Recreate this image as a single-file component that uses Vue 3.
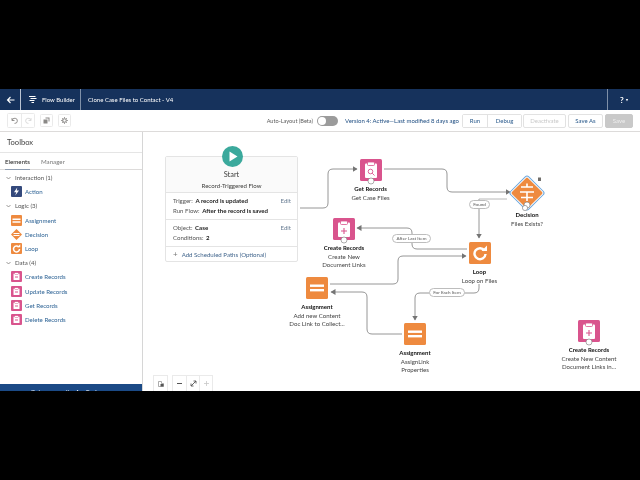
<template>
  <div class="screen">
    <div class="app">
      <header class="topbar">
        <button class="back">
          <svg width="9" height="8" viewBox="0 0 9 8"><path d="M8.5 4H1.5M4.5 1 1.5 4l3 3" fill="none" stroke="#fff" stroke-width="1.1" /></svg>
        </button>
        <div class="brand">
          <svg width="9" height="9" viewBox="0 0 9 9"><path d="M1 1.5h6.5M2.5 3.5h6M1.5 5.500h5M3.5 7.5h2.5" fill="none" stroke="#fff" stroke-width="1" /></svg>
          <span>Flow Builder</span>
        </div>
        <div class="flow-title">Clone Case Files to Contact - V4</div>
        <div class="help">? <span class="caret">▾</span></div>
      </header>

      <div class="toolbar">
        <div class="tool-group">
          <button class="tool"><svg width="7" height="7" viewBox="0 0 7 7"><path d="M1 1v2.5h2.5M1.2 3.4A2.6 2.6 0 1 1 3.5 6.4" fill="none" stroke="#8a8886" stroke-width="0.9" /></svg></button>
          <button class="tool"><svg width="7" height="7" viewBox="0 0 7 7"><path d="M6 1v2.5H3.5M5.8 3.4A2.6 2.6 0 1 0 3.5 6.4" fill="none" stroke="#d8d8d8" stroke-width="0.9" /></svg></button>
        </div>
        <button class="tool solo"><svg width="7" height="7" viewBox="0 0 7 7"><path d="M2.5 0.5h4v4h-1v-3h-3z M0.5 2.5h4v4h-4z" fill="#8a8886" /></svg></button>
        <button class="tool solo"><svg width="7" height="7" viewBox="0 0 7 7"><circle cx="3.5" cy="3.5" r="1.8" fill="none" stroke="#8a8886" stroke-width="1.1" /><path d="M3.5 0v1.2M3.5 5.8V7M0 3.5h1.2M5.8 3.5H7M1 1l.9.9M5.1 5.1l.9.9M6 1l-.9.9M1.9 5.1 1 6" stroke="#8a8886" stroke-width="0.8" /></svg></button>

        <div class="tool-right">
          <span class="auto-label">Auto-Layout (Beta)</span>
          <span class="toggle"><i></i></span>
          <span class="version">Version 4: Active—Last modified 8 days ago</span>
          <div class="btn-group">
            <button class="btn run">Run</button>
            <button class="btn debug">Debug</button>
          </div>
          <button class="btn deactivate">Deactivate</button>
          <button class="btn save-as">Save As</button>
          <button class="btn save">Save</button>
        </div>
      </div>

      <div class="body">
        <aside class="toolbox">
          <div class="toolbox-head">Toolbox</div>
          <div class="tabs">
            <span class="tab active">Elements</span>
            <span class="tab">Manager</span>
          </div>
          <div class="palette">
            <template v-for="section in palette" :key="section.name">
              <div class="section-row">
                <svg width="5" height="4" viewBox="0 0 5 4"><path d="M.5 1 2.5 3 4.5 1" fill="none" stroke="#706e6b" stroke-width="0.7" /></svg>
                {{ section.name }}
              </div>
              <div v-for="item in section.items" :key="item.name" class="item-row">
                <svg width="11" height="11" viewBox="0 0 22 22">
                  <template v-if="item.type === 'action'">
                    <rect width="22" height="22" rx="2" fill="#34497c" />
                    <path d="M12.5 3 6 12.5h4.5L8.5 19l7.5-10h-4.5z" fill="#fff" />
                  </template>
                  <template v-else-if="item.type === 'assign'">
                    <rect width="22" height="22" rx="2" fill="#ee8a3f" />
                    <rect x="3" y="7" width="16" height="3" fill="#fff" />
                    <rect x="3" y="12.5" width="16" height="3" fill="#fff" />
                  </template>
                  <template v-else-if="item.type === 'decision'">
                    <path d="M11 0 22 11 11 22 0 11z" fill="#ee8a3f" />
                    <rect x="5" y="8" width="12" height="2" fill="#fff" />
                    <rect x="5" y="12" width="12" height="2" fill="#fff" />
                  </template>
                  <template v-else-if="item.type === 'loop'">
                    <rect width="22" height="22" rx="2" fill="#ee8a3f" />
                    <path d="M15.5 8A6 6 0 1 0 17 12" fill="none" stroke="#fff" stroke-width="3" />
                    <path d="M12.5 8.5h6v-6z" fill="#fff" />
                  </template>
                  <template v-else>
                    <rect width="22" height="22" rx="2" fill="#d9548d" />
                    <rect x="5" y="5" width="12" height="13" rx="1" fill="#fff" />
                    <rect x="8" y="3.5" width="6" height="3.5" fill="#fff" stroke="#d9548d" />
                    <path d="M8 12h6" stroke="#d9548d" stroke-width="2" />
                  </template>
                </svg>
                <span>{{ item.name }}</span>
              </div>
            </template>
          </div>
          <div class="promo">Get more on the AppExchange</div>
        </aside>

        <main class="canvas">
          <svg class="wires" width="497" height="259" viewBox="143 132 497 259">
            <defs>
              <marker id="tip" markerWidth="6" markerHeight="6" refX="4.5" refY="3" orient="auto" markerUnits="userSpaceOnUse">
                <path d="M0 0 5 3 0 6z" fill="#747474" />
              </marker>
            </defs>
            <path v-for="d in wires" :key="d" :d="d" fill="none" stroke="#8a8a8a" stroke-width="0.9" marker-end="url(#tip)" />
            <path d="M479 199H507" fill="none" stroke="#b8b8b8" stroke-width="1" />
          </svg>

          <section class="start-card">
            <div class="play">
              <svg width="21" height="21" viewBox="0 0 21 21"><circle cx="10.5" cy="10.5" r="10.5" fill="#3ba99c" /><path d="M7.5 5.5 15.5 10.5 7.5 15.5z" fill="#fff" /></svg>
            </div>
            <div class="start-head">
              <div class="start-title">Start</div>
              <div class="start-sub">Record-Triggered Flow</div>
            </div>
            <div class="start-row">
              <div>
                <div class="kv"><span>Trigger:</span> <b>A record is updated</b></div>
                <div class="kv"><span>Run Flow:</span> <b>After the record is saved</b></div>
              </div>
              <a class="edit">Edit</a>
            </div>
            <div class="start-row">
              <div>
                <div class="kv"><span>Object:</span> <b>Case</b></div>
                <div class="kv"><span>Conditions:</span> <b>2</b></div>
              </div>
              <a class="edit">Edit</a>
            </div>
            <div class="start-add"><span class="plus">+</span> Add Scheduled Paths (Optional)</div>
          </section>

          <div v-for="node in nodes" :key="node.id" class="node" :style="nodeStyle(node)">
            <svg v-if="node.type === 'decision'" class="glyph glyph-decision" width="38" height="38" viewBox="0 0 38 38">
              <rect x="7" y="7" width="24" height="24" rx="2" transform="rotate(45 19 19)" fill="#ee8a3f" stroke="#fff" stroke-width="1.4" />
              <rect x="6.3" y="6.3" width="25.4" height="25.4" rx="2.5" transform="rotate(45 19 19)" fill="none" stroke="#6ba6dc" stroke-width="1" />
              <path d="M13 13h12M12 18h14M13 23.5h12M19 9.500v3.500M19 18v5M19 24v3" stroke="#fff" stroke-width="1.6" />
              <circle cx="19" cy="31" r="3" fill="#fff" stroke="#777" stroke-width="0.6" />
              <circle cx="17" cy="34" r="2.6" fill="#fff" stroke="#777" stroke-width="0.6" />
              <path d="M30 3.5h3v3.5h-3z" fill="#706e6b" />
            </svg>
            <svg v-else class="glyph" width="22" height="22" viewBox="0 0 22 22">
              <template v-if="node.type === 'assign'">
                <rect width="22" height="22" rx="1.5" fill="#ee8a3f" />
                <rect x="4" y="7.5" width="14" height="2.4" fill="#fff" />
                <rect x="4" y="12" width="14" height="2.4" fill="#fff" />
              </template>
              <template v-else-if="node.type === 'loop'">
                <rect width="22" height="22" rx="1.5" fill="#ee8a3f" />
                <path d="M15.5 8.5A5.5 5.5 0 1 0 16.5 12" fill="none" stroke="#fff" stroke-width="2.4" />
                <path d="M12.5 9h5.500V3.500z" fill="#fff" />
              </template>
              <template v-else>
                <rect width="22" height="22" rx="1.5" fill="#d9548d" />
                <rect x="5" y="4.5" width="12" height="14.5" rx="1" fill="#fff" />
                <rect x="7.5" y="3" width="7" height="3.5" rx="1" fill="#fff" stroke="#d9548d" stroke-width="0.8" />
                <path v-if="node.type === 'create'" d="M11 10v6M8 13h6" stroke="#d9548d" stroke-width="1.1" />
                <g v-else fill="none" stroke="#d9548d" stroke-width="0.9">
                  <circle cx="10.5" cy="12.5" r="2.3" />
                  <path d="M12.2 14.2 14.5 16.5" />
                </g>
                <circle cx="11" cy="22" r="3" fill="#fff" stroke="#777" stroke-width="0.6" />
              </template>
            </svg>
            <div class="node-title">{{ node.title }}</div>
            <div v-for="line in node.lines" :key="line" class="node-line">{{ line }}</div>
          </div>

          <span v-for="pill in pills" :key="pill.text" class="pill" :style="pillStyle(pill)">{{ pill.text }}</span>

          <div class="zoom-tools">
            <button class="zoom-btn lone"><svg width="6" height="6" viewBox="0 0 6 6"><path d="M.5.5h3v2h2v3h-5z" fill="none" stroke="#8a8a8a" stroke-width="0.7" /><rect x="2.5" y="3" width="3" height="2.5" fill="#555" /></svg></button>
            <div class="zoom-group">
              <button class="zoom-btn"><svg width="7" height="7" viewBox="0 0 7 7"><path d="M1 3.5h5" stroke="#555" stroke-width="1" /></svg></button>
              <button class="zoom-btn"><svg width="7" height="7" viewBox="0 0 7 7"><path d="M1 6 6 1M3.500 1H6v2.500M1 3.500V6h2.500" fill="none" stroke="#555" stroke-width="0.9" /></svg></button>
              <button class="zoom-btn"><svg width="7" height="7" viewBox="0 0 7 7"><path d="M1 3.5h5M3.5 1v5" stroke="#c8c8c8" stroke-width="0.8" /></svg></button>
            </div>
          </div>
        </main>
      </div>
    </div>
  </div>
</template>

<script setup>
const palette = [
  { name: 'Interaction (1)', items: [{ name: 'Action', type: 'action' }] },
  {
    name: 'Logic (3)',
    items: [
      { name: 'Assignment', type: 'assign' },
      { name: 'Decision', type: 'decision' },
      { name: 'Loop', type: 'loop' }
    ]
  },
  {
    name: 'Data (4)',
    items: [
      { name: 'Create Records', type: 'record' },
      { name: 'Update Records', type: 'record' },
      { name: 'Get Records', type: 'record' },
      { name: 'Delete Records', type: 'record' }
    ]
  }
]

// page coordinates: x is the centre of the icon, y its top edge
const nodes = [
  { id: 'get', x: 370.5, y: 159, type: 'get', title: 'Get Records', lines: ['Get Case Files'] },
  { id: 'decision', x: 527, y: 174, type: 'decision', title: 'Decision', lines: ['Files Exists?'] },
  { id: 'create1', x: 344, y: 218, type: 'create', title: 'Create Records', lines: ['Create New', 'Document Links'] },
  { id: 'loop', x: 479.5, y: 242, type: 'loop', title: 'Loop', lines: ['Loop on Files'] },
  { id: 'assign1', x: 317, y: 277, type: 'assign', title: 'Assignment', lines: ['Add new Content', 'Doc Link to Collect...'] },
  { id: 'assign2', x: 415, y: 323, type: 'assign', title: 'Assignment', lines: ['AssignLink', 'Properties'] },
  { id: 'create2', x: 589, y: 320, type: 'create', title: 'Create Records', lines: ['Create New Content', 'Document Links in...'] }
]

const wires = [
  'M300 208H323Q328 208 328 203V174Q328 169 333 169H357',
  'M384 169H442Q447 169 447 174V187Q447 192 452 192H510',
  'M479 199V238',
  'M467 249H417Q412 249 412 244V233Q412 228 407 228H357',
  'M330 284H393Q398 284 398 279V261Q398 256 403 256H466',
  'M479 284V288Q479 293 474 293H420Q415 293 415 298V320',
  'M402 334H372Q367 334 367 329V297Q367 292 362 292H331'
]

const pills = [
  { text: 'Found', x: 469, y: 200, w: 21 },
  { text: 'After Last Item', x: 392, y: 234, w: 39 },
  { text: 'For Each Item', x: 429, y: 288, w: 36 }
]

function nodeStyle(node) {
  return { left: node.x - 143 - 45 + 'px', top: node.y - 132 + 'px' }
}

function pillStyle(pill) {
  return { left: pill.x - 143 + 'px', top: pill.y - 132 + 'px', width: pill.w + 'px' }
}
</script>

<style>
html, body {
  margin: 0;
  background: #000;
}
</style>

<style scoped>
.screen {
  width: 640px;
  height: 480px;
  padding-top: 89px;
  box-sizing: border-box;
  background: #000;
  overflow: hidden;
  font-family: "Lato", "Liberation Sans", sans-serif;
  color: #3e3e3c;
}

.app {
  height: 302px;
  display: flex;
  flex-direction: column;
  background: #fff;
  overflow: hidden;
  filter: blur(0.3px);
}

button {
  font-family: inherit;
  padding: 0;
  margin: 0;
}

.topbar {
  height: 21px;
  flex: none;
  display: flex;
  align-items: stretch;
  background: #16325c;
  color: #fff;
  font-size: 6px;
}

.back {
  width: 21px;
  border: none;
  border-right: 1px solid #b9c3d2;
  background: none;
  display: flex;
  align-items: center;
  justify-content: center;
}

.brand {
  width: 60px;
  box-sizing: border-box;
  padding-left: 7px;
  display: flex;
  align-items: center;
  gap: 5px;
  border-right: 1px solid #7f90a8;
}

.flow-title {
  padding-left: 7px;
  display: flex;
  align-items: center;
  flex: 1;
}

.help {
  width: 33px;
  box-sizing: border-box;
  border-left: 1px solid #7f90a8;
  padding-left: 12px;
  display: flex;
  align-items: center;
  gap: 2px;
  font-size: 8px;
  font-weight: 700;
}

.caret {
  font-size: 4px;
}

.toolbar {
  height: 22px;
  flex: none;
  box-sizing: border-box;
  border-bottom: 1px solid #dddbda;
  display: flex;
  align-items: center;
  padding: 0 7px;
  gap: 5px;
}

.tool-group {
  display: flex;
  border: 1px solid #eaeaea;
  border-radius: 1.5px;
}

.tool {
  width: 13px;
  height: 13px;
  border: none;
  background: #fff;
  display: flex;
  align-items: center;
  justify-content: center;
}

.tool + .tool {
  border-left: 1px solid #eaeaea;
}

.tool.solo {
  border: 1px solid #eaeaea;
  border-radius: 1.5px;
}

.tool-right {
  margin-left: auto;
  display: flex;
  align-items: center;
  font-size: 5.6px;
}

.auto-label {
  color: #5c5c5c;
  margin-right: 4px;
}

.toggle {
  width: 21px;
  height: 10px;
  border-radius: 5px;
  background: #9b9b9b;
  display: flex;
  align-items: center;
  padding-left: 1px;
  box-sizing: border-box;
  margin-right: 7px;
}

.toggle i {
  width: 8px;
  height: 8px;
  border-radius: 50%;
  background: #fff;
}

.version {
  color: #1f4e82;
  font-size: 6px;
  margin-right: 3px;
}

.btn-group {
  display: flex;
  border: 1px solid #e2e2e2;
  border-radius: 2px;
  margin-right: 1px;
}

.btn {
  height: 14px;
  box-sizing: border-box;
  border: 1px solid #e2e2e2;
  border-radius: 2px;
  background: #fff;
  color: #2a5a8c;
  font-size: 6px;
}

.btn-group .btn {
  height: 12px;
  border: none;
  border-radius: 0;
}

.run {
  width: 25px;
  border-right: 1px solid #e2e2e2 !important;
}

.debug {
  width: 33px;
}

.deactivate {
  width: 43px;
  color: #c9c9c9;
  margin-right: 2px;
}

.save-as {
  width: 35px;
  margin-right: 2px;
}

.save {
  width: 28px;
  background: #c9c9c9;
  border-color: #c9c9c9;
  color: #eee;
}

.body {
  flex: 1;
  display: flex;
  min-height: 0;
}

.toolbox {
  width: 143px;
  flex: none;
  box-sizing: border-box;
  border-right: 1px solid #d6d6d6;
  display: flex;
  flex-direction: column;
}

.toolbox-head {
  height: 21px;
  flex: none;
  box-sizing: border-box;
  border-bottom: 1px solid #e5e5e5;
  padding-left: 7px;
  display: flex;
  align-items: center;
  font-size: 7.6px;
  color: #444;
}

.tabs {
  height: 17px;
  flex: none;
  box-sizing: border-box;
  border-bottom: 1px solid #dddbda;
  display: flex;
  align-items: stretch;
  padding-left: 5px;
  gap: 11px;
  font-size: 6.2px;
}

.tab {
  display: flex;
  align-items: center;
  color: #777;
}

.tab.active {
  color: #222;
  box-shadow: inset 0 -1px 0 #8d9cb0;
  margin-bottom: -1px;
}

.palette {
  flex: 1;
  padding-top: 0.5px;
}

.section-row,
.item-row {
  height: 14.2px;
  display: flex;
  align-items: center;
  font-size: 6.1px;
}

.section-row {
  padding-left: 6px;
  gap: 4px;
  color: #555;
}

.item-row {
  padding-left: 10.5px;
  gap: 3.5px;
  color: #2f6496;
}

.promo {
  height: 7px;
  flex: none;
  background: #1b4a86;
  color: #fff;
  font-size: 6px;
  text-align: center;
  line-height: 16px;
  overflow: hidden;
}

.canvas {
  flex: 1;
  position: relative;
  overflow: hidden;
}

.wires {
  position: absolute;
  left: 0;
  top: 0;
}

.start-card {
  position: absolute;
  left: 22px;
  top: 23.5px;
  width: 133px;
  height: 106px;
  box-sizing: border-box;
  border: 1px solid #e4e4e4;
  border-radius: 2px;
  background: #fff;
  font-size: 6.1px;
}

.play {
  position: absolute;
  left: 55.5px;
  top: -11px;
  height: 21px;
}

.start-head {
  height: 36px;
  box-sizing: border-box;
  padding-top: 13px;
  background: #fafafa;
  border-bottom: 1px solid #e4e4e4;
  text-align: center;
}

.start-title {
  font-size: 7.4px;
  line-height: 10px;
}

.start-sub {
  font-size: 6.1px;
  line-height: 11px;
}

.start-row {
  height: 27px;
  box-sizing: border-box;
  border-bottom: 1px solid #e4e4e4;
  padding: 3.5px 6px 0 7px;
  display: flex;
  justify-content: space-between;
  align-items: flex-start;
}

.kv {
  line-height: 10px;
  white-space: nowrap;
  color: #555;
}

.kv b {
  color: #222;
  margin-left: 1px;
}

.edit {
  line-height: 10px;
  color: #6b7f95;
}

.start-add {
  height: 15px;
  padding-left: 7px;
  display: flex;
  align-items: center;
  gap: 4px;
  color: #41658c;
  white-space: nowrap;
}

.plus {
  font-size: 8px;
  line-height: 1;
  color: #777;
}

.node {
  position: absolute;
  width: 90px;
  text-align: center;
  font-size: 6.1px;
  line-height: 8.5px;
  color: #444;
}

.glyph {
  display: block;
  margin: 0 auto 4px;
  overflow: visible;
}

.glyph-decision {
  margin-bottom: -1px;
}

.node-title {
  color: #111;
  font-weight: 700;
  font-size: 6px;
}

.pill {
  position: absolute;
  height: 9px;
  box-sizing: border-box;
  border: 1px solid #bdbdbd;
  border-radius: 4.5px;
  background: #fff;
  color: #555;
  font-size: 4.6px;
  line-height: 7px;
  text-align: center;
  white-space: nowrap;
}

.zoom-tools {
  position: absolute;
  left: 10px;
  bottom: 0;
  display: flex;
  gap: 4px;
}

.zoom-group {
  display: flex;
  border: 1px solid #eaeaea;
  border-bottom: none;
}

.zoom-btn {
  width: 13px;
  height: 15px;
  border: none;
  background: #fff;
  display: flex;
  align-items: center;
  justify-content: center;
}

.zoom-btn + .zoom-btn {
  border-left: 1px solid #eaeaea;
}

.zoom-btn.lone {
  box-sizing: content-box;
  border: 1px solid #eaeaea;
  border-bottom: none;
}
</style>
